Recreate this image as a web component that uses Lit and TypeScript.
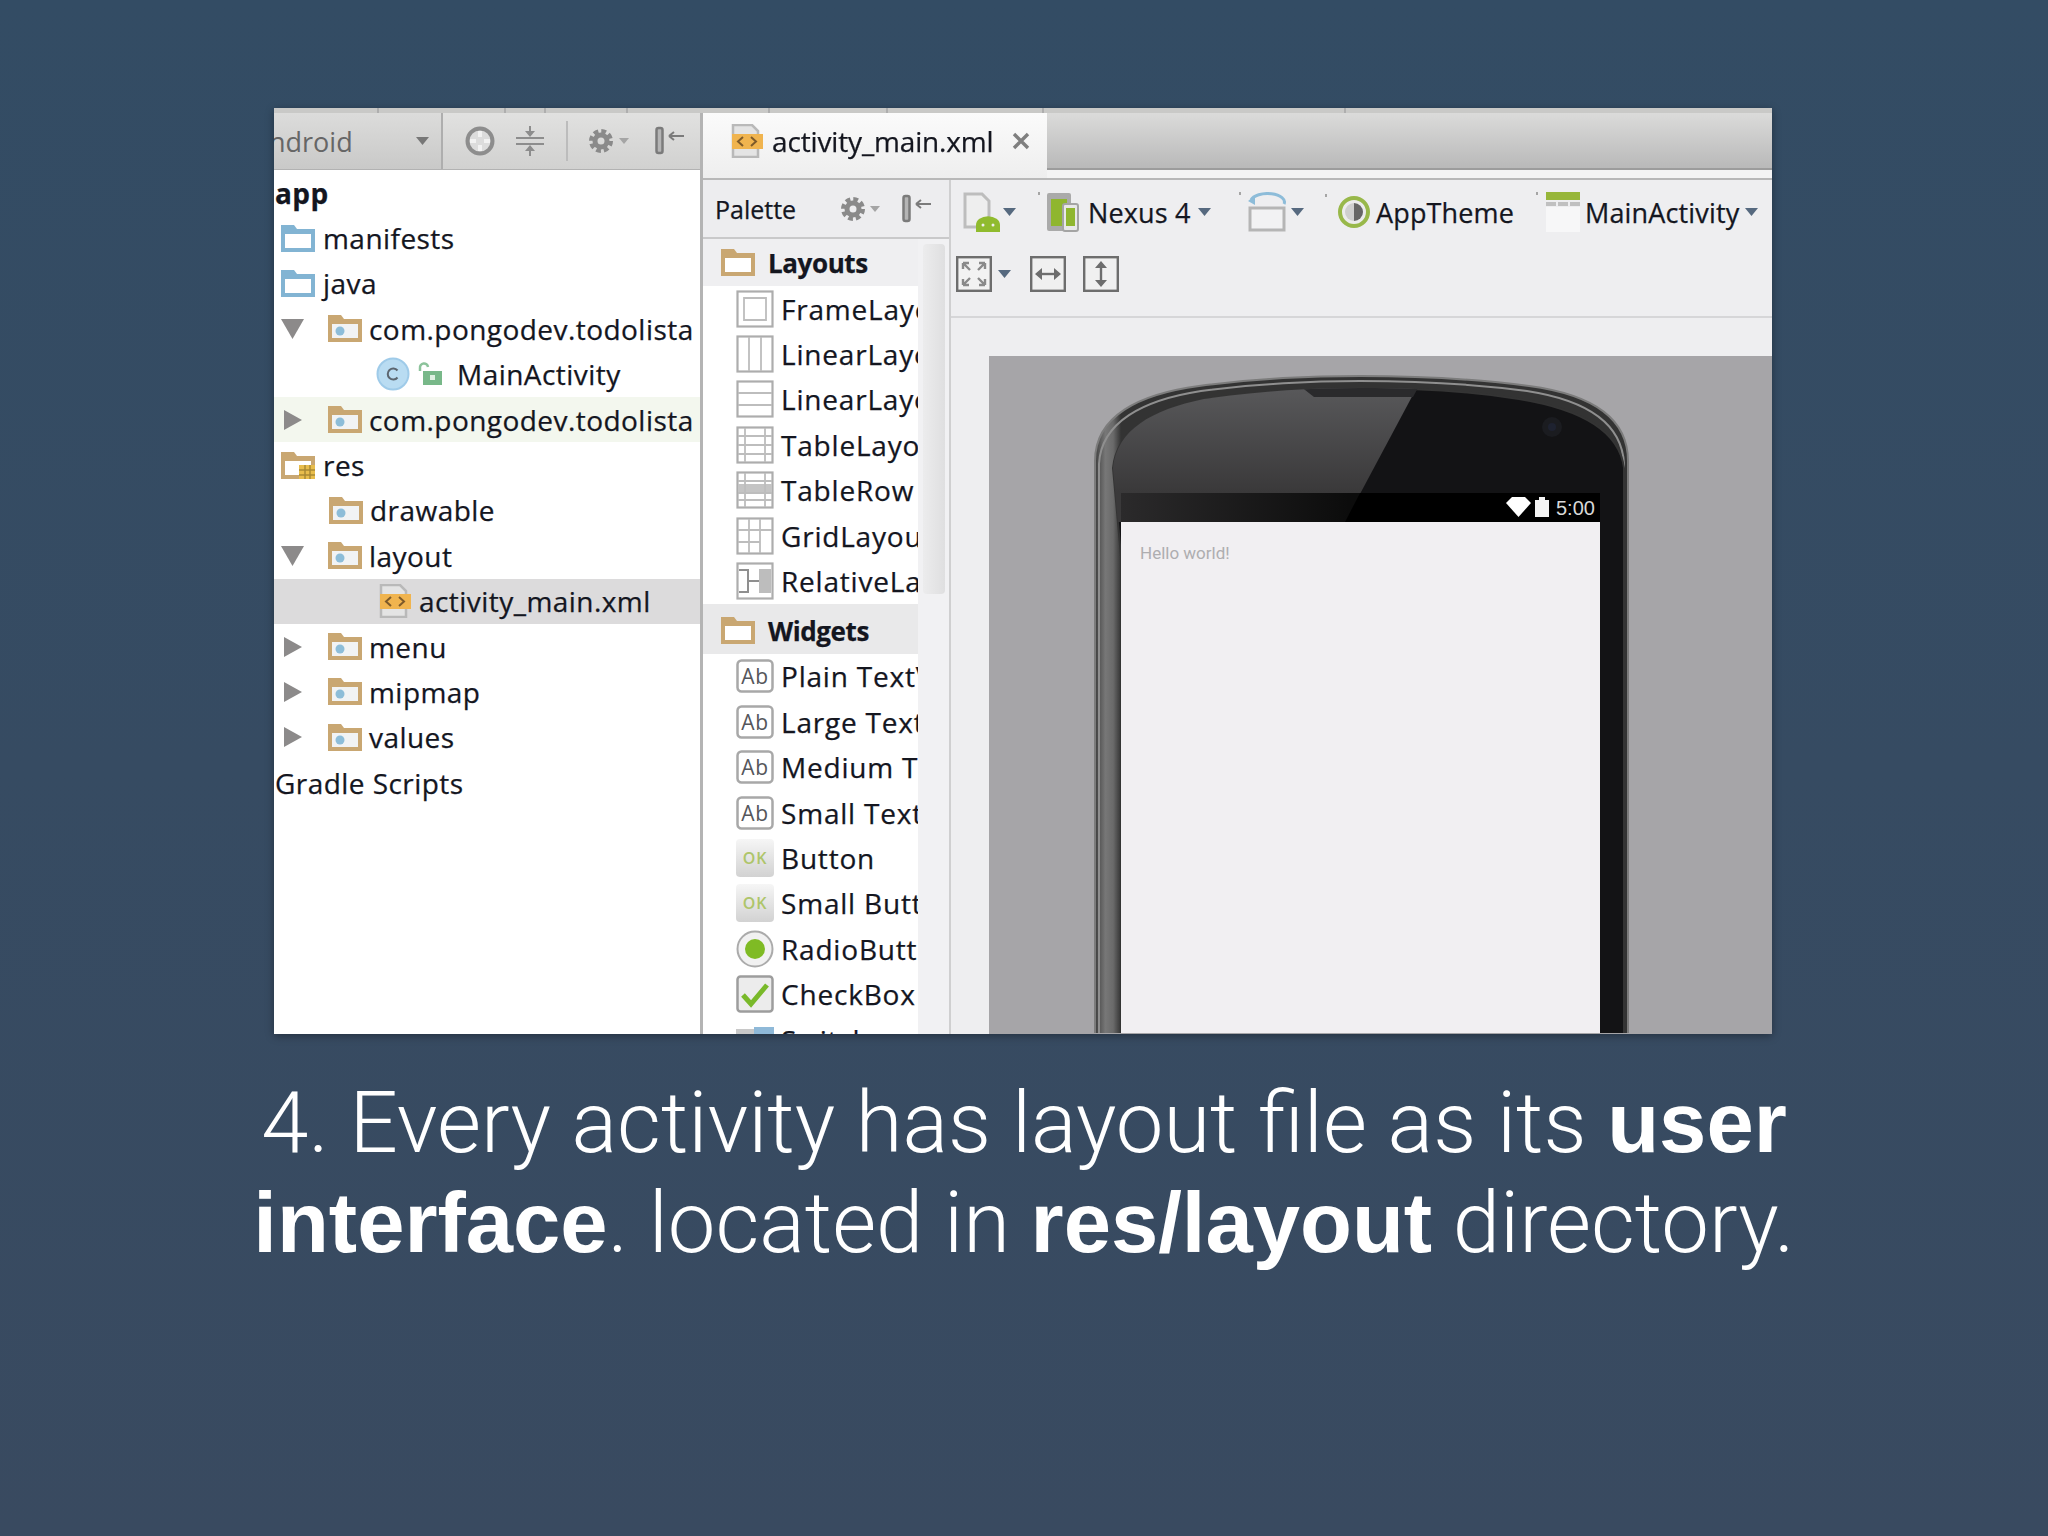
import { LitElement, html, css, svg } from "lit";
import { customElement } from "lit/decorators.js";

const TAN = "#c9a772";
const BLUE = "#82b4d3";
const CARET = "#56697f";

const folder = (c: string, dot = false, grid = false) => html`<svg class="ico-folder" width="34" height="27" viewBox="0 0 34 27">
  <path d="M0 0h13l3 4h18v23H0z" fill=${c} />
  <rect x="4" y="9" width="26" height="14" fill=${dot ? "#f1f3f4" : "#fff"} />
  ${dot ? svg`<circle cx="12" cy="16" r="4.5" fill="#8dbdd8" />` : ""}
  ${grid
    ? svg`<rect x="18" y="13" width="16" height="16" fill="#e8bd4c" /><path d="M18 18h16M18 23h16M24 13v16M29 13v16" stroke="#a98a35" stroke-width="1.5" />`
    : ""}
</svg>`;

const xmlIcon = () => html`<svg class="ico-file" width="32" height="34" viewBox="0 0 32 34">
  <path d="M2 1h19l6 6v26H2z" fill="#e4e4e4" stroke="#b9b9b9" stroke-width="2.5" />
  <rect x="1" y="10" width="31" height="15" fill="#f0b44f" />
  <path d="M12 13l-5 4.5 5 4.5M20 13l5 4.5-5 4.5" fill="none" stroke="#7d5a2a" stroke-width="2" />
</svg>`;

const classIcon = () => html`<svg class="ico-class" width="66" height="34" viewBox="0 0 66 34">
  <circle cx="17" cy="17" r="15.5" fill="#b9dcf2" stroke="#9fcbe9" stroke-width="2" />
  <path d="M21.5 13.5a5.5 5.5 0 1 0 0 7" fill="none" stroke="#5c6670" stroke-width="2" />
  <path d="M44 14v-3a4 4 0 0 1 8-1" fill="none" stroke="#8cc39b" stroke-width="2.5" />
  <rect x="47" y="14" width="19" height="14" fill="#78b889" />
  <rect x="54" y="18" width="5" height="5" fill="#dff0e2" />
</svg>`;

const arrowDown = html`<svg class="arrow" width="24" height="20" viewBox="0 0 24 20"><path d="M0 0h23L11.5 20z" fill="#8c8a8a" /></svg>`;
const arrowRight = html`<svg class="arrow" width="24" height="20" viewBox="0 0 24 20"><path d="M3 0l18 10L3 20z" fill="#8c8a8a" /></svg>`;

const caret = (c = CARET, w = 13) => html`<svg class="caret" width=${w} height="8" viewBox="0 0 13 8"><path d="M0 0h13L6.5 8z" fill=${c} /></svg>`;

const gear = () => html`<svg width="30" height="30" viewBox="-15 -15 30 30">
  <circle r="9.5" fill="none" stroke="#8a8a8a" stroke-width="5" stroke-dasharray="4.6 2.86" />
  <circle r="6" fill="none" stroke="#8a8a8a" stroke-width="5" />
</svg>`;

const pin = () => html`<svg width="30" height="30" viewBox="0 0 30 30">
  <rect x="1.5" y="2" width="6" height="25" rx="2" fill="#b5b5b5" stroke="#7b7b7b" stroke-width="2.5" />
  <path d="M14 10h15M14 10l5-4M14 10l5 4" fill="none" stroke="#7b7b7b" stroke-width="2" />
</svg>`;

const target = html`<svg width="32" height="32" viewBox="-16 -16 32 32">
  <circle r="12.5" fill="#dcdcdc" stroke="#8d8d8d" stroke-width="4" />
  <path d="M0-10v6M0 10v-6M-10 0h6M10 0h-6" stroke="#f2f2f2" stroke-width="4" />
</svg>`;

const collapse = html`<svg width="30" height="32" viewBox="0 0 30 32">
  <path d="M1 13h28M1 19h28" stroke="#8d8d8d" stroke-width="2" />
  <path d="M15 1v8M15 31v-8" stroke="#8d8d8d" stroke-width="2" />
  <path d="M10 6h10l-5 6zM10 26h10l-5-6z" fill="#8d8d8d" />
</svg>`;

const box = (inner: unknown) => html`<svg width="38" height="38" viewBox="0 0 38 38">
  <rect x="1.5" y="1.5" width="35" height="35" fill="#fff" stroke="#adadad" stroke-width="2.2" />
  ${inner}
</svg>`;
const grey = (d: string) => svg`<path d=${d} fill="none" stroke="#bdbdbd" stroke-width="1.8" />`;

const frameIco = () => box(grey("M8 8h22v22H8z"));
const linVIco = () => box(grey("M13 2v34M25 2v34"));
const linHIco = () => box(grey("M2 13h34M2 25h34"));
const tableIco = () => box(grey("M2 10h34M2 19h34M2 28h34M9 2v34M29 2v34"));
const rowIco = () =>
  box(svg`<rect x="2" y="13" width="34" height="9" fill="#c4c4c4" />${grey("M2 10h34M2 22h34M2 29h34M9 2v34M29 2v34")}`);
const gridIco = () => box(grey("M2 13h34M2 25h22M13 2v34M24 2v34"));
const relIco = () =>
  box(svg`<rect x="23" y="7" width="12" height="24" fill="#bdbdbd" /><path d="M3 8h9v22H3M12 19h11M12 14v10" fill="none" stroke="#8f8f8f" stroke-width="2" />`);

const abIco = () => html`<svg width="38" height="34" viewBox="0 0 38 34">
  <rect x="1.5" y="1.5" width="35" height="31" rx="4" fill="#fff" stroke="#a8a8a8" stroke-width="2.5" />
  <text x="19" y="25" text-anchor="middle" font-family="Open Sans, sans-serif" font-size="21" fill="#55565b">Ab</text>
</svg>`;
const okIco = () => html`<svg width="38" height="38" viewBox="0 0 38 38">
  <defs><linearGradient id="okg" x1="0" y1="0" x2="0" y2="1"><stop offset="0" stop-color="#f6f6f6" /><stop offset="1" stop-color="#d2d2d2" /></linearGradient></defs>
  <rect x="0" y="0" width="38" height="38" rx="4" fill="url(#okg)" />
  <text x="19" y="25" text-anchor="middle" font-family="Open Sans, sans-serif" font-weight="600" font-size="16" fill="#aec56a">OK</text>
</svg>`;
const radioIco = () => html`<svg width="38" height="38" viewBox="0 0 38 38">
  <circle cx="19" cy="19" r="17.5" fill="#f1f1f1" stroke="#ababab" stroke-width="2" />
  <circle cx="19" cy="19" r="10" fill="#7fbb24" />
</svg>`;
const checkIco = () => html`<svg width="38" height="38" viewBox="0 0 38 38">
  <rect x="1.5" y="1.5" width="35" height="35" rx="3" fill="#ececec" stroke="#9d9d9d" stroke-width="2.5" />
  <path d="M7 20l8 9L31 10" fill="none" stroke="#79b92a" stroke-width="5" />
</svg>`;
const switchIco = () => html`<svg width="38" height="38" viewBox="0 0 38 38">
  <rect x="0" y="8" width="20" height="16" fill="#c8c8c8" /><rect x="18" y="6" width="20" height="18" fill="#8fb9d8" />
</svg>`;

const targetSdk = html`<svg width="38" height="40" viewBox="0 0 38 40">
  <path d="M2 2h17l7 7v26H2z" fill="#eee" stroke="#bdbdbd" stroke-width="3" />
  <path d="M13 40v-7a11 8 0 0 1 24 0v7z" fill="#90bb2e" />
  <circle cx="20" cy="33" r="1.5" fill="#eee" /><circle cx="30" cy="33" r="1.5" fill="#eee" />
</svg>`;
const deviceIco = html`<svg width="32" height="40" viewBox="0 0 32 40">
  <rect x="0" y="1" width="24" height="38" rx="2" fill="#aaa" />
  <rect x="4" y="7" width="16" height="27" fill="#8fb62f" />
  <rect x="16" y="12" width="15" height="27" rx="2" fill="#e8e8e8" stroke="#a4a4a4" stroke-width="2" />
  <rect x="19" y="16" width="9" height="18" fill="#8fb62f" />
</svg>`;
const rotateIco = html`<svg width="40" height="40" viewBox="0 0 40 40">
  <rect x="2" y="16" width="34" height="22" fill="#f2f2f3" stroke="#b5b5b5" stroke-width="3" />
  <path d="M3 8a16 8 0 0 1 33 4" fill="none" stroke="#8dbcd9" stroke-width="3" />
  <path d="M0 9l7-5v9z" fill="#8dbcd9" />
</svg>`;
const themeIco = html`<svg width="34" height="34" viewBox="-17 -17 34 34">
  <circle r="14" fill="#ececec" stroke="#98b84a" stroke-width="4" />
  <path d="M0-9a9 9 0 0 1 0 18z" fill="#666" />
  <path d="M0-9a9 9 0 0 0 0 18z" fill="#cfcfcf" />
</svg>`;
const activityIco = html`<svg width="34" height="40" viewBox="0 0 34 40">
  <rect x="0" y="0" width="34" height="8" fill="#97b63a" />
  <rect x="0" y="10" width="10" height="4" fill="#c0c0c0" /><rect x="12" y="10" width="10" height="4" fill="#c0c0c0" /><rect x="24" y="10" width="10" height="4" fill="#c0c0c0" />
  <rect x="0" y="15" width="34" height="25" fill="#f7f7f8" />
</svg>`;
const zoomFit = html`<svg width="36" height="36" viewBox="0 0 36 36">
  <rect x="1.2" y="1.2" width="33.6" height="33.6" fill="#f2f2f2" stroke="#6d6d6d" stroke-width="2.4" />
  <path d="M7 7l7 7M29 7l-7 7M7 29l7-7M29 29l-7-7M7 7h6M7 7v6M29 7h-6M29 7v6M7 29h6M7 29v-6M29 29h-6M29 29v-6" stroke="#8a8a8a" stroke-width="2.4" fill="none" />
</svg>`;
const fitW = html`<svg width="36" height="36" viewBox="0 0 36 36">
  <rect x="1.2" y="1.2" width="33.6" height="33.6" fill="#f0f0f0" stroke="#6d6d6d" stroke-width="2.4" />
  <path d="M7 18h22" stroke="#6d6d6d" stroke-width="2.4" /><path d="M5 18l7-6v12zM31 18l-7-6v12z" fill="#6d6d6d" />
</svg>`;
const fitH = html`<svg width="36" height="36" viewBox="0 0 36 36">
  <rect x="1.2" y="1.2" width="33.6" height="33.6" fill="#f0f0f0" stroke="#6d6d6d" stroke-width="2.4" />
  <path d="M18 7v22" stroke="#6d6d6d" stroke-width="2.4" /><path d="M18 5l-6 7h12zM18 31l-6-7h12z" fill="#6d6d6d" />
</svg>`;

const OUTER = "M106 690V105C106 60 150 38 210 30C270 22 320 20 371 20C430 20 480 22 540 30C600 38 639 60 639 105V690Z";
const RIM = "M110 690V108C112 66 154 44 212 35C272 27 322 25 371 25C430 25 478 27 538 35C596 44 633 66 635 108V690Z";
const BEZEL = "M132 690V200L124 112C128 74 162 54 215 43C270 35 320 32 371 32C430 32 480 35 530 43C585 52 630 72 635 112V690Z";

const phone = html`<svg class="phone" width="783" height="677" viewBox="0 0 783 677">
  <defs>
    <linearGradient id="side" x1="106" y1="0" x2="132" y2="0" gradientUnits="userSpaceOnUse">
      <stop offset="0" stop-color="#3f3f3f" /><stop offset="0.4" stop-color="#777" /><stop offset="0.7" stop-color="#6a6a6a" /><stop offset="1" stop-color="#333" />
    </linearGradient>
    <linearGradient id="glare" x1="0" y1="33" x2="0" y2="136" gradientUnits="userSpaceOnUse">
      <stop offset="0" stop-color="#58585a" /><stop offset="1" stop-color="#3a393a" />
    </linearGradient>
    <linearGradient id="barglare" x1="132" y1="0" x2="360" y2="0" gradientUnits="userSpaceOnUse">
      <stop offset="0" stop-color="#2b2a2b" /><stop offset="1" stop-color="#0c0c0c" />
    </linearGradient>
    <clipPath id="bz"><path d=${BEZEL} /></clipPath>
  </defs>
  <path d=${OUTER} fill="url(#side)" stroke="#7c7c7c" stroke-width="2" />
  <path d=${RIM} fill="none" stroke="#8f8f8f" stroke-width="2" />
  <path d=${BEZEL} fill="#131315" stroke="#343434" stroke-width="2" />
  <g clip-path="url(#bz)">
    <path d="M100 20H434L356 166H100z" fill="url(#glare)" />
    <path d="M311 30H430L424 41H325z" fill="#2a2a2c" />
  </g>
  <rect x="132" y="137" width="479" height="29" fill="#000" />
  <path d="M132 137H371L356 166H132z" fill="url(#barglare)" />
  <circle cx="563" cy="71" r="10" fill="#1b1c20" /><circle cx="563" cy="71" r="4" fill="#1e2230" />
  <path d="M523 141H536L542 147L529.5 161L517 147z" fill="#fff" />
  <path d="M550 141H556V144H560V161H546V144H550z" fill="#f4f4f4" />
  <text x="567" y="159" font-family="Liberation Sans, sans-serif" font-size="20" fill="#d8d8d8">5:00</text>
  <rect x="132" y="166" width="479" height="511" fill="#f1eff2" />
  <text x="151" y="203" font-family="Roboto, sans-serif" font-size="17" fill="#aeadb0">Hello world!</text>
</svg>`;

const tree = [
  { cls: "l0 bold", text: "app" },
  { cls: "l1", icon: () => folder(BLUE), text: "manifests" },
  { cls: "l1", icon: () => folder(BLUE), text: "java" },
  { cls: "l2", arrow: arrowDown, icon: () => folder(TAN, true), text: "com.pongodev.todolista" },
  { cls: "l3", icon: classIcon, text: "MainActivity" },
  { cls: "l2 tint", arrow: arrowRight, icon: () => folder(TAN, true), text: "com.pongodev.todolista" },
  { cls: "l1", icon: () => folder(TAN, false, true), text: "res" },
  { cls: "l2", icon: () => folder(TAN, true), text: "drawable" },
  { cls: "l2", arrow: arrowDown, icon: () => folder(TAN, true), text: "layout" },
  { cls: "l4 sel", icon: xmlIcon, text: "activity_main.xml" },
  { cls: "l2", arrow: arrowRight, icon: () => folder(TAN, true), text: "menu" },
  { cls: "l2", arrow: arrowRight, icon: () => folder(TAN, true), text: "mipmap" },
  { cls: "l2", arrow: arrowRight, icon: () => folder(TAN, true), text: "values" },
  { cls: "l0", text: "Gradle Scripts" },
];

const layouts = [
  { icon: frameIco, text: "FrameLayout" },
  { icon: linVIco, text: "LinearLayout" },
  { icon: linHIco, text: "LinearLayout" },
  { icon: tableIco, text: "TableLayout" },
  { icon: rowIco, text: "TableRow" },
  { icon: gridIco, text: "GridLayout" },
  { icon: relIco, text: "RelativeLayout" },
];
const widgets = [
  { icon: abIco, text: "Plain TextView" },
  { icon: abIco, text: "Large Text" },
  { icon: abIco, text: "Medium Text" },
  { icon: abIco, text: "Small Text" },
  { icon: okIco, text: "Button" },
  { icon: okIco, text: "Small Button" },
  { icon: radioIco, text: "RadioButton" },
  { icon: checkIco, text: "CheckBox" },
  { icon: switchIco, text: "Switch" },
];

@customElement("app-root")
export class AppRoot extends LitElement {
  static styles = css`
    :host {
      display: block;
      width: 2048px;
      height: 1536px;
      overflow: hidden;
      background: linear-gradient(#334c64, #394a60);
    }
    svg {
      display: block;
      flex: none;
    }
    .slide {
      display: flex;
      flex-direction: column;
      align-items: center;
      padding-top: 108px;
    }
    .shot {
      width: 1498px;
      height: 926px;
      margin-left: -2px;
      display: flex;
      flex-direction: column;
      overflow: hidden;
      background: #fff;
      box-shadow: 0 2px 8px rgba(0, 0, 0, 0.35);
      filter: blur(0.7px);
      font-family: "Open Sans", sans-serif;
      font-size: 28px;
      color: #14161f;
      -webkit-text-stroke: 0.25px #14161f;
    }
    .strip {
      height: 5px;
      flex: none;
      display: flex;
      background: #c9c9c7;
    }
    .strip i {
      border-right: 2px solid #aeaeae;
    }
    .s1 { width: 103px; }
    .s2 { width: 125px; }
    .s3 { width: 38px; }
    .s4 { width: 80px; }
    .s5 { width: 140px; }
    .s6 { width: 116px; }
    .s7 { width: 154px; }
    .s8 { width: 300px; }
    .main {
      flex: 1;
      display: flex;
      min-height: 0;
    }
    .project {
      width: 429px;
      flex: none;
      border-right: 3px solid #b4b4b4;
      box-sizing: border-box;
      display: flex;
      flex-direction: column;
      overflow: hidden;
    }
    .ptools {
      height: 59px;
      flex: none;
      box-sizing: border-box;
      display: flex;
      align-items: center;
      background: linear-gradient(#e1e1e0, #d1d1d0);
      border-bottom: 3px solid #b2b2b2;
      color: #666;
      -webkit-text-stroke: 0;
    }
    .combo {
      width: 169px;
      height: 100%;
      flex: none;
      box-sizing: border-box;
      display: flex;
      align-items: center;
      justify-content: space-between;
      overflow: hidden;
      padding-right: 11px;
      border-right: 2px solid #aeaeae;
      background: linear-gradient(#dcdcdb, #c9c9c8);
      font-size: 27px;
    }
    .combo span {
      margin-left: -5px;
    }
    .ptools .t1 { margin-left: 21px; }
    .ptools .t2 { margin-left: 19px; }
    .ptools .sep {
      width: 2px;
      height: 40px;
      margin: 0 18px 0 21px;
      background: #bcbcbc;
    }
    .ptools .t5 { margin-left: 26px; }
    .ptools .caret {
      margin-left: 3px;
    }
    .tree {
      flex: 1;
      background: #fff;
      margin-top: -2px;
    }
    .row {
      height: 45.4px;
      box-sizing: border-box;
      display: flex;
      align-items: center;
      white-space: nowrap;
      letter-spacing: 0.45px;
    }
    .row .arrow {
      margin-left: 7px;
      margin-right: 16px;
    }
    .l0 { padding-left: 1px; }
    .l1 { padding-left: 7px; gap: 8px; }
    .l2 { padding-left: 55px; gap: 7px; }
    .l2.has-arrow { padding-left: 0; }
    .l3 { padding-left: 102px; gap: 15px; }
    .l4 { padding-left: 105px; gap: 8px; }
    .bold { font-weight: 700; }
    .tint { background: #f3f7ee; }
    .sel { background: #dcdbdc; }
    .right {
      flex: 1;
      min-width: 0;
      display: flex;
      flex-direction: column;
    }
    .tabbar {
      height: 67px;
      flex: none;
      display: flex;
      background: #f4f4f4;
      border-bottom: 2px solid #b8b8b8;
      box-sizing: border-box;
    }
    .tab {
      width: 344px;
      flex: none;
      box-sizing: border-box;
      display: flex;
      align-items: center;
      padding: 0 17px 10px 28px;
      background: linear-gradient(#fbfbfb, #eeeeee);
      letter-spacing: -0.15px;
    }
    .tab .ico-file {
      margin-right: 9px;
    }
    .tab .close {
      margin-left: auto;
    }
    .tabrest {
      flex: 1;
      height: 57px;
      background: linear-gradient(#dbdbda, #b9b9b9);
      border-bottom: 2px solid #9c9c9c;
      box-sizing: border-box;
    }
    .rbody {
      flex: 1;
      display: flex;
      min-height: 0;
    }
    .palette {
      width: 248px;
      flex: none;
      display: flex;
      flex-direction: column;
      background: #f1f1f3;
      border-right: 2px solid #cfcfd0;
      box-sizing: border-box;
    }
    .phead {
      height: 59px;
      flex: none;
      box-sizing: border-box;
      display: flex;
      align-items: center;
      padding-left: 12px;
      font-size: 25px;
      background: #ededef;
      border-bottom: 2px solid #c9c9ca;
    }
    .phead .g { margin-left: 42px; }
    .phead .caret { margin-left: 2px; }
    .phead .p { margin-left: 22px; }
    .pbody {
      flex: 1;
      display: flex;
      min-height: 0;
    }
    .plist {
      width: 215px;
      flex: none;
      overflow: hidden;
    }
    .sect {
      height: 47px;
      box-sizing: border-box;
      display: flex;
      align-items: center;
      gap: 13px;
      padding-left: 18px;
      font-size: 26px;
      font-weight: 700;
      letter-spacing: -0.4px;
      background: #efeff1;
    }
    .sect.alt {
      height: 50px;
      padding-top: 4px;
      background: #e9e9ea;
    }
    .item {
      height: 45.4px;
      box-sizing: border-box;
      display: flex;
      align-items: center;
      gap: 7px;
      padding-left: 33px;
      white-space: nowrap;
      background: #fff;
      letter-spacing: 0.8px;
    }
    .track {
      flex: 1;
      padding: 5px 4px 0 5px;
    }
    .thumb {
      height: 350px;
      border-radius: 4px;
      background: linear-gradient(90deg, #ececed, #dfdfe0);
    }
    .editor {
      flex: 1;
      min-width: 0;
      display: flex;
      flex-direction: column;
      background: #eeeef0;
    }
    .bars {
      height: 138px;
      flex: none;
      box-sizing: border-box;
      border-bottom: 2px solid #d6d6d8;
      display: flex;
      flex-direction: column;
      padding: 12px 0 0 5px;
      font-size: 27px;
      letter-spacing: 0.15px;
    }
    .bar1 {
      height: 40px;
      display: flex;
      align-items: center;
    }
    .bar1 > div {
      display: flex;
      align-items: center;
      flex: none;
      box-sizing: border-box;
    }
    .c1 { width: 84px; padding-left: 7px; gap: 2px; }
    .c2 { width: 201px; padding-left: 7px; gap: 9px; }
    .c3 { width: 86px; padding-left: 7px; gap: 3px; }
    .c4 { width: 211px; padding-left: 10px; gap: 5px; }
    .c5 { padding-left: 8px; gap: 5px; }
    .c2 .caret { margin-left: -2px; }
    .c5 .caret { margin-left: 1px; }
    .tick {
      position: relative;
    }
    .tick::before {
      content: "";
      position: absolute;
      left: -2px;
      top: 0;
      width: 2px;
      height: 3px;
      background: #a5a5a5;
    }
    .bar2 {
      display: flex;
      align-items: center;
      margin-top: 24px;
    }
    .bar2 .caret { margin-left: 6px; }
    .bar2 .w { margin-left: 19px; }
    .bar2 .h { margin-left: 17px; }
    .canvas-wrap {
      flex: 1;
      min-height: 0;
      padding: 38px 0 0 38px;
    }
    .canvas {
      height: 100%;
      background: #a6a5a8;
      overflow: hidden;
    }
    .caption {
      margin: 39px 0 0;
      text-align: center;
      color: #fff;
      font-family: Roboto, "Liberation Sans", sans-serif;
      font-weight: 300;
      font-size: 85px;
      line-height: 100px;
      white-space: nowrap;
    }
    .caption b {
      font-family: "Liberation Sans", sans-serif;
      font-weight: 700;
    }
  `;

  render() {
    return html`
      <div class="slide">
        <div class="shot">
          <div class="strip">
            <i class="s1"></i><i class="s2"></i><i class="s3"></i><i class="s4"></i><i class="s5"></i><i class="s6"></i><i class="s7"></i><i class="s8"></i>
          </div>
          <div class="main">
            <div class="project">
              <div class="ptools">
                <div class="combo"><span>ndroid</span>${caret("#777", 15)}</div>
                <div class="t1">${target}</div>
                <div class="t2">${collapse}</div>
                <div class="sep"></div>
                <div>${gear()}</div>
                ${caret("#a5a5a5", 10)}
                <div class="t5">${pin()}</div>
              </div>
              <div class="tree">
                ${tree.map(
                  (r) => html`<div class="row ${r.cls} ${r.arrow ? "has-arrow" : ""}">
                    ${r.arrow ?? ""}${r.icon ? r.icon() : ""}<span>${r.text}</span>
                  </div>`
                )}
              </div>
            </div>
            <div class="right">
              <div class="tabbar">
                <div class="tab">
                  ${xmlIcon()}<span>activity_main.xml</span>
                  <svg class="close" width="18" height="18" viewBox="0 0 18 18"><path d="M2 2l14 14M16 2L2 16" stroke="#7f7f7f" stroke-width="3.4" /></svg>
                </div>
                <div class="tabrest"></div>
              </div>
              <div class="rbody">
                <div class="palette">
                  <div class="phead">
                    <span>Palette</span><span class="g">${gear()}</span>${caret("#a5a5a5", 10)}<span class="p">${pin()}</span>
                  </div>
                  <div class="pbody">
                    <div class="plist">
                      <div class="sect">${folder(TAN)}<span>Layouts</span></div>
                      ${layouts.map((i) => html`<div class="item">${i.icon()}<span>${i.text}</span></div>`)}
                      <div class="sect alt">${folder(TAN)}<span>Widgets</span></div>
                      ${widgets.map((i) => html`<div class="item">${i.icon()}<span>${i.text}</span></div>`)}
                    </div>
                    <div class="track"><div class="thumb"></div></div>
                  </div>
                </div>
                <div class="editor">
                  <div class="bars">
                    <div class="bar1">
                      <div class="c1">${targetSdk}${caret()}</div>
                      <div class="c2 tick">${deviceIco}<span>Nexus 4</span>${caret()}</div>
                      <div class="c3 tick">${rotateIco}${caret()}</div>
                      <div class="c4 tick">${themeIco}<span>AppTheme</span></div>
                      <div class="c5 tick">${activityIco}<span>MainActivity</span>${caret()}</div>
                    </div>
                    <div class="bar2">
                      ${zoomFit}${caret()}
                      <div class="w">${fitW}</div>
                      <div class="h">${fitH}</div>
                    </div>
                  </div>
                  <div class="canvas-wrap"><div class="canvas">${phone}</div></div>
                </div>
              </div>
            </div>
          </div>
        </div>
        <p class="caption">4. Every activity has layout file as its <b>user</b><br /><b>interface</b>. located in <b>res/layout</b> directory.</p>
      </div>
    `;
  }
}
